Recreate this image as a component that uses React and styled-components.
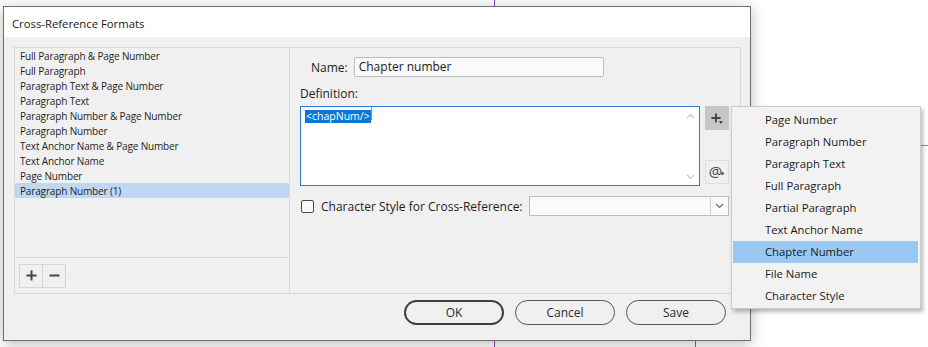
import React from "react";
import styled, { createGlobalStyle } from "styled-components";

const Global = createGlobalStyle`
  html, body { margin: 0; padding: 0; background: #ffffff; }
  body { width: 928px; height: 347px; overflow: hidden; font-family: "Open Sans", "Noto Sans", sans-serif; color: #1a1a1a; }
  * { box-sizing: border-box; }
`;

const Desktop = styled.div`
  position: relative;
  width: 928px;
  height: 347px;
  background: #ffffff;
`;

const Guide = styled.div`
  position: absolute;
  top: ${(p) => p.$top}px;
  left: ${(p) => p.$left}px;
  width: ${(p) => p.$w || 1}px;
  height: ${(p) => p.$h}px;
  background: ${(p) => p.$color};
`;

const Window = styled.div`
  position: absolute;
  left: 3px;
  top: 6px;
  width: 748px;
  height: 335px;
  border: 1px solid #6f6f6f;
  background: #f0f0f0;
  box-shadow: 0 3px 14px rgba(0, 0, 0, 0.28);
  display: flex;
  flex-direction: column;
`;

const TitleBar = styled.div`
  height: 30px;
  background: #ffffff;
  display: flex;
  align-items: center;
  padding: 2px 0 0 8px;
  font-size: 11.3px;
  color: #1a1a1a;
  flex-shrink: 0;
`;

const Body = styled.div`
  flex: 1;
  display: flex;
  flex-direction: column;
  padding: 10px 9px 0 10px;
`;

const Panel = styled.div`
  height: 247px;
  border: 1px solid #d9d9d9;
  display: flex;
`;

const LeftCol = styled.div`
  width: 275px;
  border-right: 1px solid #d9d9d9;
  display: flex;
  flex-direction: column;
`;

const List = styled.div`
  height: 210px;
  border-bottom: 1px solid #d9d9d9;
  display: flex;
  flex-direction: column;
`;

const ListItem = styled.div`
  height: 15px;
  line-height: 17px;
  padding-left: 5px;
  font-size: 10px;
  letter-spacing: -0.15px;
  color: #1e1e1e;
  background: ${(p) => (p.$selected ? "#bfd7f1" : "transparent")};
  white-space: nowrap;
`;

const ListFooter = styled.div`
  flex: 1;
  display: flex;
  align-items: center;
  padding-left: 4px;
`;

const SquareBtn = styled.div`
  width: 24px;
  height: 24px;
  border: 1px solid #d6d6d6;
  margin-left: ${(p) => (p.$joined ? "-1px" : "0")};
  display: flex;
  align-items: center;
  justify-content: center;
`;

const RightCol = styled.div`
  flex: 1;
  padding: 9px 0 0 10px;
  display: flex;
  flex-direction: column;
  font-size: 12px;
`;

const NameRow = styled.div`
  display: flex;
  align-items: center;
  height: 20px;
  padding-left: 11px;
`;

const Label = styled.span`
  font-size: 12px;
  color: #1e1e1e;
  white-space: nowrap;
`;

const TextInput = styled.div`
  margin-left: 6px;
  width: 250px;
  height: 20px;
  border: 1px solid #bdbdbd;
  border-radius: 2px;
  background: #fafafa;
  font-size: 12px;
  line-height: 18px;
  padding-left: 4px;
  color: #1a1a1a;
`;

const DefLabel = styled.div`
  margin-top: 9px;
  height: 16px;
  line-height: 16px;
  font-size: 12px;
  color: #1e1e1e;
`;

const DefRow = styled.div`
  margin-top: 4px;
  display: flex;
  align-items: flex-start;
`;

const TextArea = styled.div`
  width: 400px;
  height: 80px;
  border: 1px solid #2b7cd3;
  background: #ffffff;
  display: flex;
`;

const TextBody = styled.div`
  flex: 1;
  padding: 0 0 0 4px;
`;

const Selected = styled.span`
  display: inline-block;
  background: #0a78d7;
  color: #ffffff;
  font-size: 10.5px;
  line-height: 13px;
  padding: 0 1px;
`;

const Caret = styled.span`
  display: inline-block;
  width: 1px;
  height: 13px;
  vertical-align: top;
  background: #e07a20;
`;

const ScrollBar = styled.div`
  width: 18px;
  display: flex;
  flex-direction: column;
  justify-content: space-between;
  align-items: center;
  padding: 6px 0 5px;
`;

const SideButtons = styled.div`
  margin-left: 5px;
  width: 24px;
  height: 78px;
  display: flex;
  flex-direction: column;
  justify-content: space-between;
`;

const IconBtn = styled.div`
  position: relative;
  width: 24px;
  height: 24px;
  background: ${(p) => (p.$pressed ? "#c6c6c6" : "#f0f0f0")};
  border: 1px solid ${(p) => (p.$pressed ? "#c6c6c6" : "#dedede")};
  display: flex;
  align-items: center;
  justify-content: center;
  font-size: 15px;
  color: #444;
`;

const IconGlyph = styled.span`
  display: flex;
  margin: ${(p) => p.$m};
  line-height: 1;
`;

const Tri = styled.span`
  position: absolute;
  right: ${(p) => p.$r}px;
  bottom: ${(p) => p.$b}px;
  width: 0;
  height: 0;
  border-left: 2px solid transparent;
  border-right: 2px solid transparent;
  border-top: 3px solid #444;
  transform: ${(p) => (p.$side ? "rotate(-90deg)" : "none")};
`;

const CheckRow = styled.div`
  margin-top: 10px;
  display: flex;
  align-items: center;
  height: 20px;
`;

const CheckBox = styled.div`
  width: 13px;
  height: 13px;
  border: 1px solid #4a4a4a;
  border-radius: 2px;
  background: #fafafa;
  margin: 1px 7px 0 1px;
`;

const CheckLabel = styled(Label)`
  padding-top: 1px;
`;

const Select = styled.div`
  margin-left: 6px;
  width: 200px;
  height: 20px;
  border: 1px solid #bdbdbd;
  background: #fafafa;
  display: flex;
  justify-content: flex-end;
`;

const SelectArrow = styled.div`
  width: 18px;
  border-left: 1px solid #cfcfcf;
  display: flex;
  align-items: center;
  justify-content: center;
`;

const ButtonRow = styled.div`
  display: flex;
  justify-content: flex-end;
  gap: 11px;
  padding: 6px 15px 0 0;
`;

const PillButton = styled.div`
  width: 100px;
  height: 25px;
  border-radius: 13px;
  border: ${(p) => (p.$default ? "2px solid #3f3f3f" : "1px solid #555")};
  display: flex;
  align-items: center;
  justify-content: center;
  font-size: 12px;
  color: #2a2a2a;
  background: #f0f0f0;
`;

const Menu = styled.div`
  position: absolute;
  left: 731px;
  top: 106px;
  width: 190px;
  height: 203px;
  background: #f2f2f2;
  border: 1px solid #cccccc;
  box-shadow: 2px 3px 4px rgba(0, 0, 0, 0.28);
  padding: 2px 2px 0 1px;
  display: flex;
  flex-direction: column;
`;

const MenuItem = styled.div`
  height: 22px;
  line-height: 22px;
  padding-left: 32px;
  font-size: 11.3px;
  color: #1a1a1a;
  background: ${(p) => (p.$active ? "#99c9f3" : "transparent")};
  white-space: nowrap;
`;

const Chevron = ({ up, color = "#c4c4c4" }) => (
  <svg width="9" height="6" viewBox="0 0 9 6">
    <path
      d={up ? "M1 5 L4.5 1.5 L8 5" : "M1 1 L4.5 4.5 L8 1"}
      fill="none"
      stroke={color}
      strokeWidth="1.1"
    />
  </svg>
);

const PlusIcon = ({ size = 11 }) => (
  <svg width={size} height={size} viewBox="0 0 11 11">
    <path d="M5.5 0.5 V10.5 M0.5 5.5 H10.5" stroke="#444" strokeWidth="2" />
  </svg>
);

const MinusIcon = () => (
  <svg width="11" height="11" viewBox="0 0 11 11">
    <path d="M0.5 5.5 H10.5" stroke="#444" strokeWidth="2" />
  </svg>
);

const listItems = [
  "Full Paragraph & Page Number",
  "Full Paragraph",
  "Paragraph Text & Page Number",
  "Paragraph Text",
  "Paragraph Number & Page Number",
  "Paragraph Number",
  "Text Anchor Name & Page Number",
  "Text Anchor Name",
  "Page Number",
  "Paragraph Number (1)",
];

const menuItems = [
  "Page Number",
  "Paragraph Number",
  "Paragraph Text",
  "Full Paragraph",
  "Partial Paragraph",
  "Text Anchor Name",
  "Chapter Number",
  "File Name",
  "Character Style",
];

export default function App() {
  return (
    <>
      <Global />
      <Desktop>
        <Guide $left={494} $top={0} $h={347} $color="#9b3fd0" />
        <Guide $left={695} $top={330} $h={17} $color="#3d7fd6" />
        <Guide $left={921} $top={145} $w={7} $h={1} $color="#5b9be0" />
        <Window>
          <TitleBar>Cross-Reference Formats</TitleBar>
          <Body>
            <Panel>
              <LeftCol>
                <List>
                  {listItems.map((t, i) => (
                    <ListItem key={i} $selected={i === listItems.length - 1}>
                      {t}
                    </ListItem>
                  ))}
                </List>
                <ListFooter>
                  <SquareBtn>
                    <PlusIcon />
                  </SquareBtn>
                  <SquareBtn $joined>
                    <MinusIcon />
                  </SquareBtn>
                </ListFooter>
              </LeftCol>
              <RightCol>
                <NameRow>
                  <Label>Name:</Label>
                  <TextInput>Chapter number</TextInput>
                </NameRow>
                <DefLabel>Definition:</DefLabel>
                <DefRow>
                  <TextArea>
                    <TextBody>
                      <Selected>&lt;chapNum/&gt;</Selected>
                      <Caret />
                    </TextBody>
                    <ScrollBar>
                      <Chevron up />
                      <Chevron />
                    </ScrollBar>
                  </TextArea>
                  <SideButtons>
                    <IconBtn $pressed>
                      <IconGlyph $m="0 3px 1px 0">
                        <PlusIcon size={10} />
                      </IconGlyph>
                      <Tri $r={5} $b={5} />
                    </IconBtn>
                    <IconBtn>
                      <IconGlyph $m="-2px 3px 0 0">@</IconGlyph>
                      <Tri $r={3} $b={8} $side />
                    </IconBtn>
                  </SideButtons>
                </DefRow>
                <CheckRow>
                  <CheckBox />
                  <CheckLabel>Character Style for Cross-Reference:</CheckLabel>
                  <Select>
                    <SelectArrow>
                      <Chevron color="#666" />
                    </SelectArrow>
                  </Select>
                </CheckRow>
              </RightCol>
            </Panel>
            <ButtonRow>
              <PillButton $default>OK</PillButton>
              <PillButton>Cancel</PillButton>
              <PillButton>Save</PillButton>
            </ButtonRow>
          </Body>
        </Window>
        <Menu>
          {menuItems.map((t) => (
            <MenuItem key={t} $active={t === "Chapter Number"}>
              {t}
            </MenuItem>
          ))}
        </Menu>
      </Desktop>
    </>
  );
}
